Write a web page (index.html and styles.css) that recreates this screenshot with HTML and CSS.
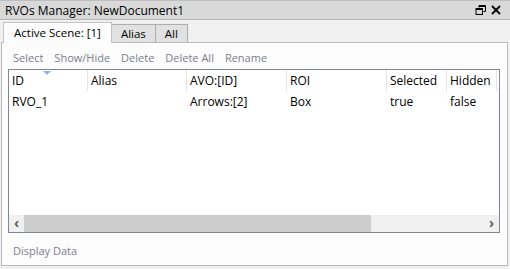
FILE: index.html
```html
<!DOCTYPE html>
<html lang="en">
<head>
    <meta charset="UTF-8">
    <title>RVOs Manager</title>
    <link rel="stylesheet" href="styles.css">
</head>
<body>
    <div class="pane">
        <div class="title-bar">
            <span class="title">RVOs Manager: NewDocument1</span>
            <div class="title-buttons">
                <svg width="11" height="10" viewBox="0 0 11 10">
                    <path d="M4 0.5h6.5v6h-2M4 0.5v2M4 1.5h6.5" fill="none" stroke="#000" stroke-width="1"/>
                    <rect x="1" y="3.5" width="6.5" height="6" fill="none" stroke="#000" stroke-width="1"/>
                    <path d="M1 4.5h6.5" stroke="#000" stroke-width="1"/>
                </svg>
                <svg width="10" height="10" viewBox="0 0 10 10">
                    <path d="M1 1L9 9M9 1L1 9" stroke="#000" stroke-width="1.8"/>
                </svg>
            </div>
        </div>
        <div class="tabs">
            <div class="tab active">Active Scene: [1]</div>
            <div class="tab">Alias</div>
            <div class="tab">All</div>
        </div>
        <div class="content">
            <div class="toolbar">
                <span>Select</span>
                <span>Show/Hide</span>
                <span>Delete</span>
                <span>Delete All</span>
                <span>Rename</span>
            </div>
            <div class="table">
                <div class="row head">
                    <div class="cell c-id">ID<span class="sort"></span></div>
                    <div class="cell c-alias">Alias</div>
                    <div class="cell c-avo">AVO:[ID]</div>
                    <div class="cell c-roi">ROI</div>
                    <div class="cell c-sel">Selected</div>
                    <div class="cell c-hid">Hidden</div>
                </div>
                <div class="row">
                    <div class="cell c-id">RVO_1</div>
                    <div class="cell c-alias"></div>
                    <div class="cell c-avo">Arrows:[2]</div>
                    <div class="cell c-roi">Box</div>
                    <div class="cell c-sel">true</div>
                    <div class="cell c-hid">false</div>
                </div>
                <div class="spacer"></div>
                <div class="hscroll">
                    <div class="arrow">&#8249;</div>
                    <div class="track"><div class="thumb"></div></div>
                    <div class="arrow">&#8250;</div>
                </div>
            </div>
            <div class="footer">Display Data</div>
        </div>
    </div>
</body>
</html>
```

FILE: styles.css
```css
body {
    margin: 0;
    font-family: "Open Sans", "Noto Sans", sans-serif;
    font-size: 12px;
    background: #f0f0f0;
}
.pane {
    width: 510px;
    height: 269px;
    display: flex;
    flex-direction: column;
    background: #f0f0f0;
}
.title-bar {
    height: 20px;
    box-sizing: border-box;
    background: #d9d9d9;
    border-top: 1px solid #bdbdbd;
    border-bottom: 1px solid #b4b4b4;
    display: flex;
    align-items: center;
    justify-content: space-between;
    padding: 0 9px 0 5px;
    color: #000;
}
.title-buttons {
    display: flex;
    gap: 5px;
    align-items: center;
}
.tabs {
    display: flex;
    height: 22px;
    box-sizing: border-box;
    padding: 2px 0 0 3px;
    align-items: flex-end;
    font-size: 11.5px;
}
.tab {
    height: 18px;
    box-sizing: border-box;
    padding: 0 9px;
    background: #e1e1e1;
    border: 1px solid #adadad;
    border-bottom: none;
    border-left: none;
    display: flex;
    align-items: center;
}
.tab.active {
    height: 21px;
    background: #fcfcfc;
    border: 1px solid #c2c2c2;
    border-bottom: none;
    padding: 0 10px 2px;
    margin-bottom: -1px;
    position: relative;
}
.content {
    flex: 1;
    margin: 0 2px 3px 1px;
    background: #fcfcfc;
    border: 1px solid #b9b9b9;
    display: flex;
    flex-direction: column;
    padding: 0 7px 0 6px;
}
.toolbar {
    display: flex;
    gap: 11px;
    padding: 7px 0 0 5px;
    height: 19px;
    font-size: 11px;
    line-height: 15px;
    color: #7e7e8e;
}
.table {
    height: 164px;
    box-sizing: border-box;
    border: 1px solid #828790;
    background: #fff;
    display: flex;
    flex-direction: column;
}
.row {
    display: flex;
    height: 21px;
    align-items: center;
}
.row.head .cell {
    border-right: 1px solid #e5e5e5;
    height: 21px;
    line-height: 21px;
}
.cell {
    padding-left: 3px;
    box-sizing: border-box;
    position: relative;
    white-space: nowrap;
    overflow: hidden;
}
.c-id { width: 79px; }
.c-alias { width: 99px; }
.c-avo { width: 100px; }
.c-roi { width: 100px; }
.c-sel { width: 60px; }
.c-hid { width: 50px; }
.sort {
    position: absolute;
    left: 34px;
    top: 1px;
    width: 0;
    height: 0;
    border-left: 4px solid transparent;
    border-right: 4px solid transparent;
    border-top: 4px solid #92b4d9;
}
.spacer {
    flex: 1;
}
.hscroll {
    height: 17px;
    display: flex;
    background: #f0f0f0;
}
.arrow {
    width: 15px;
    text-align: center;
    line-height: 16px;
    font-weight: bold;
    color: #606060;
    font-size: 14px;
}
.track {
    flex: 1;
    display: flex;
}
.thumb {
    width: 347px;
    background: #cdcdcd;
}
.footer {
    padding: 10px 0 0 5px;
    font-size: 11px;
    line-height: 15px;
    color: #7e7e8e;
}
```
